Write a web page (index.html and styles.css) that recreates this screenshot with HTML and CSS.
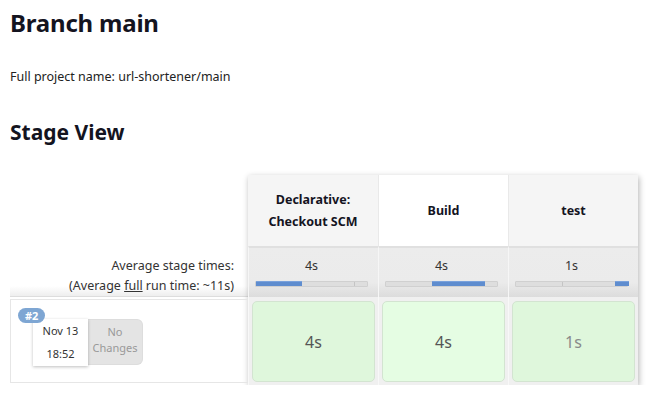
FILE: index.html
```html
<!DOCTYPE html>
<html>
<head>
<meta charset="utf-8">
<link rel="stylesheet" href="styles.css">
</head>
<body>
<h1 class="title">Branch main</h1>
<p class="fullname">Full project name: url-shortener/main</p>
<h2 class="subtitle">Stage View</h2>
<div class="stageview">
  <div class="leftcol">
    <div class="left-head"></div>
    <div class="left-avg">
      <div>Average stage times:</div>
      <div>(Average <u>full</u> run time: ~11s)</div>
    </div>
    <div class="left-run">
      <div class="run">
        <span class="badge">#2</span>
        <div class="date"><div>Nov 13</div><div>18:52</div></div>
        <div class="changes">No<br>Changes</div>
      </div>
    </div>
  </div>
  <div class="stages">
    <div class="head gray">Declarative:<br>Checkout SCM</div>
    <div class="head white">Build</div>
    <div class="head gray">test</div>

    <div class="avg"><div class="t">4s</div><div class="bar"><span class="fill" style="left:0;width:46px"></span><span class="tick" style="left:98px"></span></div></div>
    <div class="avg"><div class="t">4s</div><div class="bar"><span class="fill" style="left:46px;width:53px"></span></div></div>
    <div class="avg"><div class="t">1s</div><div class="bar"><span class="tick" style="left:46px"></span><span class="fill" style="left:99px;width:14px"></span></div></div>

    <div class="cell"><div class="ok">4s</div></div>
    <div class="cell"><div class="ok hover">4s</div></div>
    <div class="cell"><div class="ok light">1s</div></div>
  </div>
</div>
</body>
</html>
```
FILE: styles.css
```css
body {
  margin: 0;
  padding: 0 10px;
  font-family: "Noto Sans", "Open Sans", sans-serif;
  color: #14141f;
  background: #fff;
}
.title {
  font-size: 24px;
  font-weight: 700;
  margin: 6px 0 0;
  line-height: 34px;
  letter-spacing: -0.2px;
}
.fullname {
  font-size: 12.5px;
  color: #222;
  margin: 28px 0 0;
  line-height: 18px;
}
.subtitle {
  font-size: 21px;
  font-weight: 700;
  margin: 32px 0 0;
  line-height: 28px;
}
.stageview {
  display: flex;
  margin-top: 29px;
}
.leftcol {
  width: 238px;
  display: flex;
  flex-direction: column;
}
.left-head { height: 71px; }
.left-avg {
  height: 51px;
  text-align: right;
  padding-right: 14px;
  font-size: 12.5px;
  line-height: 20px;
  color: #333;
  box-sizing: border-box;
  padding-top: 10px;
  background: linear-gradient(to bottom, #fff 0, #fff 80%, #eee 100%);
  border-bottom: 1px solid #ddd;
}
.left-run {
  height: 87px;
  padding-top: 2px;
  box-sizing: border-box;
}
.run {
  position: relative;
  height: 84px;
  border: 1px solid #e6e6e6;
  border-right: none;
  box-sizing: border-box;
  display: flex;
  padding: 19px 0 0 22px;
}
.badge {
  position: absolute;
  left: 7px;
  top: 8px;
  background: #7ea6d3;
  color: #fff;
  font-size: 11px;
  font-weight: 700;
  line-height: 15px;
  padding: 0 7px;
  border-radius: 8px;
  z-index: 2;
}
.date {
  width: 55px;
  height: 47px;
  background: #fff;
  box-shadow: 0 1px 3px rgba(0,0,0,0.25);
  font-size: 11px;
  color: #333;
  text-align: center;
  line-height: 23px;
  z-index: 1;
}
.changes {
  width: 55px;
  height: 46px;
  background: #e4e4e4;
  border-radius: 0 6px 6px 0;
  font-size: 11px;
  color: #999;
  text-align: center;
  line-height: 16px;
  padding-top: 4px;
  box-sizing: border-box;
  border: 1px solid #ddd;
  border-left: none;
}
.stages {
  display: grid;
  grid-template-columns: repeat(3, 130px);
  grid-template-rows: 71px 51px 88px;
  box-shadow: 1px 2px 6px rgba(0,0,0,0.3);
  background: #f0f0f0;
  column-gap: 0;
}
.head {
  display: flex;
  align-items: center;
  justify-content: center;
  text-align: center;
  font-weight: 700;
  font-size: 12.5px;
  line-height: 22px;
  border-left: 1px solid #e9e9e9;
}
.head:first-child { border-left: none; }
.gray { background: #f5f5f5; }
.white { background: #fff; }
.avg {
  background: linear-gradient(to bottom, #ececec 0, #ebebeb 70%, #dcdcdc 100%);
  border-top: 2px solid #e0e0e0;
  border-left: 1px solid #f6f6f6;
  padding: 8px 10px 0 6px;
  box-sizing: border-box;
  text-align: center;
}
.avg .t {
  font-size: 12.5px;
  color: #333;
  line-height: 20px;
}
.bar {
  position: relative;
  height: 4px;
  margin-top: 5px;
  background: #dedede;
  border: 1px solid #d0d0d0;
  border-radius: 1px;
}
.bar .fill {
  position: absolute;
  top: -1px;
  height: 4px;
  background: #5f8dcf;
  border-top: 1px solid #7aa2dc;
}
.bar .tick {
  position: absolute;
  top: 0;
  width: 1px;
  height: 4px;
  background: #c4c4c4;
}
.cell {
  background: #f0f0f0;
  border-left: 1px solid #f8f8f8;
  padding: 4px 3px 3px 3px;
  box-sizing: border-box;
}
.ok {
  height: 100%;
  box-sizing: border-box;
  background: #dff7dc;
  border: 1px solid #d3e4d1;
  border-radius: 5px;
  display: flex;
  align-items: center;
  justify-content: center;
  font-size: 16px;
  color: #555;
}
.ok.hover { background: #e5fde3; }
.ok.light { color: #8a8a8a; }
```
